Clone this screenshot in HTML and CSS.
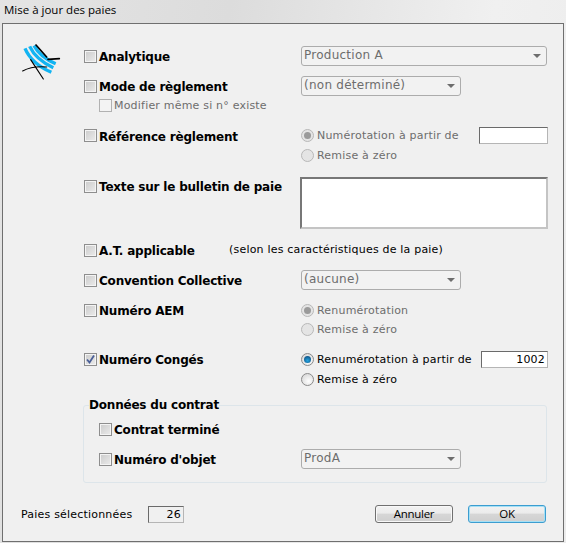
FILE: index.html
```html
<!DOCTYPE html>
<html lang="fr">
<head>
<meta charset="utf-8">
<title>Mise à jour des paies</title>
<link rel="stylesheet" href="styles.css">
</head>
<body>
<div class="window">
  <div class="titlebar">Mise à jour des paies</div>
  <div class="frame">
    <div class="main">
      <div class="logo">
        <svg width="60" height="50" viewBox="0 0 180 150">
          <path d="M45 40 C56 66 84 94 124 112 M59 34 C71 60 100 84 130 98 M72 32 C84 54 108 74 137 86" fill="none" stroke="#12b4f2" stroke-width="10"/>
          <path d="M78 30 L110 66 M114 73 L148 71" fill="none" stroke="#000" stroke-width="5" stroke-linecap="round"/>
          <path d="M38 108 C60 96 85 94 110 96 M62 74 L100 132" fill="none" stroke="#000" stroke-width="3.5" stroke-linecap="round"/>
        </svg>
      </div>
      <div class="form">
        <div class="row">
          <label class="field"><span class="check"></span><b>Analytique</b></label>
          <div class="cell"><div class="combo combo-wide">Production A<i class="caret"></i></div></div>
        </div>
        <div class="row gap-10">
          <label class="field"><span class="check"></span><b>Mode de règlement</b></label>
          <div class="cell"><div class="combo">(non déterminé)<i class="caret"></i></div></div>
        </div>
        <div class="row row-19">
          <label class="field sub disabled"><span class="check off"></span>Modifier même si n° existe</label>
        </div>
        <div class="row row-19 gap-11">
          <label class="field"><span class="check"></span><b>Référence règlement</b></label>
          <div class="cell between disabled">
            <span class="opt"><span class="radio on-off"></span>Numérotation à partir de</span>
            <span class="input input-a"></span>
          </div>
        </div>
        <div class="row">
          <span></span>
          <div class="cell disabled"><span class="opt"><span class="radio off"></span>Remise à zéro</span></div>
        </div>
        <div class="row row-text gap-12">
          <label class="field field-top field-flush"><span class="check"></span><b>Texte sur le bulletin de paie</b></label>
          <div class="textbox"></div>
        </div>
        <div class="row gap-11">
          <label class="field"><span class="check"></span><b>A.T. applicable</b></label>
        </div>
        <div class="note">(selon les caractéristiques de la paie)</div>
        <div class="row gap-10">
          <label class="field"><span class="check"></span><b>Convention Collective</b></label>
          <div class="cell"><div class="combo">(aucune)<i class="caret"></i></div></div>
        </div>
        <div class="row gap-10">
          <label class="field"><span class="check"></span><b>Numéro AEM</b></label>
          <div class="cell disabled"><span class="opt"><span class="radio on-off"></span>Renumérotation</span></div>
        </div>
        <div class="row row-19">
          <span></span>
          <div class="cell disabled"><span class="opt"><span class="radio off"></span>Remise à zéro</span></div>
        </div>
        <div class="row row-19 gap-11">
          <label class="field field-flush"><span class="check">
            <svg width="11" height="11" viewBox="0 0 11 11"><path d="M2 5.5 L4.5 8.5 L9 1.5" fill="none" stroke="#4a5f97" stroke-width="1.8"/></svg>
          </span><b>Numéro Congés</b></label>
          <div class="cell between">
            <span class="opt"><span class="radio on"></span>Renumérotation à partir de</span>
            <span class="input input-b">1002</span>
          </div>
        </div>
        <div class="row">
          <span></span>
          <div class="cell"><span class="opt"><span class="radio"></span>Remise à zéro</span></div>
        </div>
        <fieldset class="group">
          <legend>Données du contrat</legend>
          <div class="row group-row">
            <label class="field"><span class="check"></span><b>Contrat terminé</b></label>
          </div>
          <div class="row group-row gap-10">
            <label class="field"><span class="check"></span><b>Numéro d'objet</b></label>
            <div class="cell"><div class="combo">ProdA<i class="caret"></i></div></div>
          </div>
        </fieldset>
      </div>
    </div>
    <div class="footer">
      <span class="count-label">Paies sélectionnées</span>
      <span class="count">26</span>
      <span class="spacer"></span>
      <button class="btn" type="button">Annuler</button>
      <button class="btn btn-default" type="button">OK</button>
    </div>
  </div>
</div>
</body>
</html>
```
FILE: styles.css
```css
* { box-sizing: border-box; }
html, body { margin: 0; padding: 0; }
body {
  width: 566px;
  height: 543px;
  overflow: hidden;
  font-family: "DejaVu Sans", sans-serif;
  font-size: 11px;
  letter-spacing: 0.2px;
  color: #000;
}
.window {
  height: 543px;
  display: flex;
  flex-direction: column;
  padding: 0 2px 1px;
  background: linear-gradient(100deg, #e4e4e4 0%, #dcdcdc 35%, #f0f0f0 75%, #ececec 100%);
}
.titlebar {
  height: 23px;
  line-height: 20px;
  padding-left: 2px;
  font-family: "Open Sans", sans-serif;
  font-size: 11.5px;
  letter-spacing: 0;
}
.frame {
  flex: 1;
  display: flex;
  flex-direction: column;
  border: 1px solid #6f6f6f;
  background: #f0f0f0;
}
.main { display: flex; padding-top: 22px; }
.logo { width: 81px; height: 40px; padding-left: 7px; margin-top: -11px; }
.logo svg { display: block; }
.form { width: 465px; position: relative; }

.row {
  display: grid;
  grid-template-columns: 217px 247px;
  height: 20px;
  align-items: center;
}
.row-19 { height: 19px; }
.row-text { height: 52px; align-items: start; }
.gap-10 { margin-top: 10px; }
.gap-11 { margin-top: 11px; }
.gap-12 { margin-top: 12px; }

.field { display: flex; align-items: center; white-space: nowrap; }
.field-top { height: 19px; }
.field b { font-size: 12px; letter-spacing: -0.2px; padding-top: 2px; }
.field-flush b { padding-top: 0; }
.sub { padding-left: 15px; }
.disabled { color: #6d6d6d; }

.check {
  width: 13px;
  height: 13px;
  margin-right: 2px;
  flex: none;
  display: inline-flex;
  align-items: center;
  justify-content: center;
  border: 1px solid #8e8e8e;
  box-shadow: inset 0 0 0 1px #f4f4f4;
  background: linear-gradient(135deg, #cbcbcb, #ececec);
}
.check.off {
  border-color: #b1b1b1;
  box-shadow: none;
  background: #f3f3f3;
}

.cell { display: flex; align-items: center; }
.between { justify-content: space-between; }
.opt { display: flex; align-items: center; white-space: nowrap; }

.radio {
  position: relative;
  width: 13px;
  height: 13px;
  margin-right: 3px;
  flex: none;
  border-radius: 50%;
  border: 1px solid #8a8a8a;
  background: radial-gradient(circle at 60% 65%, #fff, #d0d0d0);
}
.disabled .radio { border-color: #b8b8b8; background: #e4e4e4; }
.radio.on::after, .radio.on-off::after {
  content: "";
  position: absolute;
  inset: 2px;
  border-radius: 50%;
}
.radio.on::after { background: radial-gradient(circle at 50% 65%, #25a4e0, #0a3f70); }
.radio.on-off::after { background: #9a9a9a; }

.input {
  display: block;
  height: 17px;
  background: #fff;
  border: 1px solid #b5b5b5;
  border-top-color: #6a6a6a;
  border-left-color: #6a6a6a;
  text-align: right;
  line-height: 15px;
  padding-right: 2px;
  color: #000;
}
.input-a { width: 69px; }
.input-b { width: 67px; }

.combo {
  position: relative;
  width: 160px;
  height: 20px;
  line-height: 17px;
  padding-left: 2px;
  border: 1px solid #acacac;
  border-radius: 3px;
  background: #f2f2f2;
  color: #6d6d6d;
  font-size: 12px;
  letter-spacing: 0.25px;
}
.combo-wide { width: 246px; }
.caret {
  position: absolute;
  right: 5px;
  top: 7px;
  border-left: 4px solid transparent;
  border-right: 4px solid transparent;
  border-top: 4px solid #6d6d6d;
}

.textbox {
  width: 248px;
  height: 52px;
  margin-left: -1px;
  background: #fff;
  border: 2px solid #a0a0a0;
  border-top-color: #777;
  border-left-color: #777;
  border-right-color: #c4c4c4;
  border-bottom-color: #c4c4c4;
}

.note {
  position: absolute;
  left: 145px;
  top: 194px;
  height: 20px;
  line-height: 20px;
  white-space: nowrap;
}

.group {
  margin: 9px 0 0 -1px;
  padding: 0 0 0 15px;
  width: 464px;
  height: 85px;
  border: 1px solid #dde5ea;
  border-radius: 3px;
  min-width: 0;
}
.group legend {
  margin-left: -10px;
  padding: 0;
  font-size: 12px;
  font-weight: bold;
  letter-spacing: -0.2px;
  line-height: 14px;
}
.group-row { grid-template-columns: 202px 247px; }
.group-row:first-of-type { margin-top: 7px; }

.footer {
  display: flex;
  align-items: center;
  height: 18px;
  margin-top: 22px;
  padding: 0 17px 0 18px;
}
.count-label { width: 127px; white-space: nowrap; }
.count {
  width: 36px;
  height: 17px;
  line-height: 15px;
  text-align: right;
  padding-right: 2px;
  border: 1px solid #b5b5b5;
  border-top-color: #6a6a6a;
  border-left-color: #6a6a6a;
}
.spacer { flex: 1; }
.btn {
  width: 78px;
  height: 18px;
  margin: 0 0 0 15px;
  padding: 0;
  font-family: "Open Sans", sans-serif;
  font-size: 11.5px;
  letter-spacing: -0.3px;
  line-height: 14px;
  color: #000;
  border: 1px solid #707070;
  border-radius: 3px;
  background: linear-gradient(#f2f2f2 0%, #ebebeb 45%, #d6d6d6 50%, #cfcfcf 100%);
  box-shadow: inset 0 0 0 1px #f8f8f8;
}
.btn-default { border-color: #3c9dd0; box-shadow: inset 0 0 0 1px #a6e0f5; }
```
